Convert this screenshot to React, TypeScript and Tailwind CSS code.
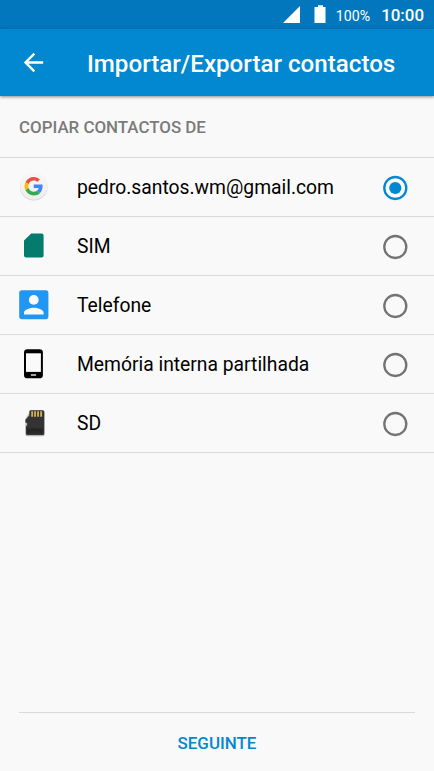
import type { ReactNode } from 'react';

interface Source {
  id: string;
  label: string;
  icon: ReactNode;
}

function GoogleIcon() {
  return (
    <svg width="40" height="40" viewBox="0 0 40 40">
      <defs>
        <linearGradient id="disc" x1="0" y1="0" x2="0" y2="1">
          <stop offset="0" stopColor="#f7f7f7" />
          <stop offset="1" stopColor="#eeeeee" />
        </linearGradient>
      </defs>
      <circle cx="19.8" cy="19.9" r="13.7" fill="#d2d2d2" />
      <circle cx="19.8" cy="19.3" r="13.5" fill="url(#disc)" />
      <g transform="translate(10.5 9.9) scale(0.385)">
        <path fill="#ea4f43" d="M24 9.5c3.54 0 6.71 1.22 9.21 3.6l6.85-6.85C35.9 2.38 30.47 0 24 0 14.62 0 6.51 5.38 2.56 13.22l7.98 6.19C12.43 13.72 17.74 9.5 24 9.5z" />
        <path fill="#4285f4" d="M46.98 24.55c0-1.57-.15-3.09-.38-4.55H24v9.02h12.94c-.58 2.96-2.26 5.48-4.78 7.18l7.73 6c4.51-4.18 7.09-10.36 7.09-17.65z" />
        <path fill="#fbbc05" d="M10.53 28.59c-.48-1.45-.76-2.99-.76-4.59s.27-3.14.76-4.59l-7.98-6.19C.92 16.46 0 20.12 0 24c0 3.88.92 7.54 2.56 10.78l7.97-6.19z" />
        <path fill="#34a853" d="M24 48c6.48 0 11.93-2.13 15.89-5.81l-7.73-6c-2.15 1.45-4.92 2.3-8.16 2.3-6.26 0-11.57-4.22-13.47-9.91l-7.98 6.19C6.51 42.62 14.62 48 24 48z" />
      </g>
    </svg>
  );
}

function SimIcon() {
  return (
    <svg width="40" height="40" viewBox="0 0 40 40">
      <path fill="#047b6d" d="M17.2 7.4h10.4a2 2 0 0 1 2 2v20.2a2 2 0 0 1-2 2H12a2 2 0 0 1-2-2V14.6z" />
    </svg>
  );
}

function PhoneContactIcon() {
  return (
    <svg width="40" height="40" viewBox="0 0 40 40">
      <rect x="5.2" y="5.2" width="29.2" height="29" rx="2.6" fill="#2196f3" />
      <circle cx="19.8" cy="14.9" r="4.9" fill="#fafafa" />
      <path fill="#fafafa" d="M10 29.6v-1.9c0-3.2 6.5-5 9.8-5s9.8 1.8 9.8 5v1.9z" />
    </svg>
  );
}

function StorageIcon() {
  return (
    <svg width="40" height="40" viewBox="0 0 40 40">
      <rect x="10" y="5.2" width="18.9" height="29.1" rx="3.4" fill="#000" />
      <rect x="12" y="9.3" width="14.9" height="18.6" fill="#fafafa" />
      <rect x="16.9" y="30.2" width="5.2" height="1.6" fill="#ccc" />
    </svg>
  );
}

function SdIcon() {
  return (
    <svg width="40" height="40" viewBox="0 0 40 40">
      <path fill="#b5b5b5" d="M16.5 7.6h12.4a1.8 1.8 0 0 1 1.8 1.8v22a1.8 1.8 0 0 1-1.8 1.8H13.2a1.8 1.8 0 0 1-1.8-1.8V16z" />
      <path fill="#333" d="M16.8 7.2h11.9a1.5 1.5 0 0 1 1.5 1.5v21.7a1.5 1.5 0 0 1-1.5 1.5H13.4a1.5 1.5 0 0 1-1.5-1.5v-7l1.3-1.1v-2.2l-1.8-.5v-2.8l4-4.3V8.6a1.4 1.4 0 0 1 1.4-1.4z" />
      <path fill="#282828" d="M13 25h16v5.5H13z" />
      <path fill="#d1ae4f" d="M17.2 8.2h1.9v5.6h-1.9zM20.1 8.2H22v5.6h-1.9zM23.1 8.2H25v5.6h-1.9zM26.2 8.2h1.9v5.6h-1.9z" />
      <path stroke="#1c1c1c" strokeWidth=".7" fill="none" d="M14.5 29.3v-1.5h2.2l1-.8h5.5l1 .8h2.5v1.5" />
    </svg>
  );
}

const sources: Source[] = [
  { id: 'google', label: 'pedro.santos.wm@gmail.com', icon: <GoogleIcon /> },
  { id: 'sim', label: 'SIM', icon: <SimIcon /> },
  { id: 'phone', label: 'Telefone', icon: <PhoneContactIcon /> },
  { id: 'storage', label: 'Memória interna partilhada', icon: <StorageIcon /> },
  { id: 'sd', label: 'SD', icon: <SdIcon /> },
];

function Radio({ checked }: { checked: boolean }) {
  const color = checked ? '#0288d1' : '#737373';
  return (
    <svg className="mt-[2px]" width="26" height="26" viewBox="0 0 26 26">
      <circle cx="13.3" cy="13" r="11" fill="none" stroke={color} strokeWidth="2.3" />
      {checked && <circle cx="13.3" cy="13" r="6.1" fill={color} />}
    </svg>
  );
}

export default function App() {
  return (
    <div className="flex h-[771px] w-[434px] flex-col overflow-hidden bg-[#f9f9f9] font-['Roboto',sans-serif]">
      {/* Status bar */}
      <div className="flex h-[29px] shrink-0 items-center justify-end bg-[#0277bd] pr-[10px] text-white">
        <svg width="46" height="29" viewBox="0 0 46 29" fill="#fff">
          <path d="M1 23 18 6v17zM32.5 7H36V5.2h5V7h2.5v16h-11z" />
        </svg>
        <span className="ml-[8px] pt-[3px] text-[14.2px] leading-none">100%</span>
        <span className="ml-[11px] pt-[2px] text-[16.9px] leading-none font-medium">10:00</span>
      </div>

      {/* App bar */}
      <header className="z-10 flex h-[67px] shrink-0 items-center bg-[#0288d1] text-white shadow-[0_1px_3px_rgba(0,0,0,0.45)]">
        <svg className="ml-[19px]" width="29" height="29" viewBox="0 0 24 24" fill="#fff">
          <path d="M20 11H7.83l5.59-5.59L12 4l-8 8 8 8 1.41-1.41L7.83 13H20v-2z" />
        </svg>
        <h1 className="ml-[39px] pt-[3px] text-[24.15px] leading-none font-medium">Importar/Exportar contactos</h1>
      </header>

      <h2 className="flex h-[62px] shrink-0 items-center border-b border-[#dadada] px-[19px] pt-px text-[16.9px] leading-none font-medium text-[#7b7b7b]">
        COPIAR CONTACTOS DE
      </h2>

      <ul>
        {sources.map((source) => (
          <li key={source.id} className="flex h-[59px] items-center border-b border-[#dadada] pr-[26px] pl-[14px] text-[19.3px] text-black">
            {source.icon}
            <span className="ml-[23px] flex-1 pt-[2px] leading-none">{source.label}</span>
            <Radio checked={source.id === 'google'} />
          </li>
        ))}
      </ul>

      <footer className="mx-[19px] mt-auto flex h-[59px] shrink-0 items-center justify-center border-t border-[#dadada]">
        <button className="pt-[2px] text-[16.95px] leading-none font-medium text-[#0288d1]">SEGUINTE</button>
      </footer>
    </div>
  );
}
